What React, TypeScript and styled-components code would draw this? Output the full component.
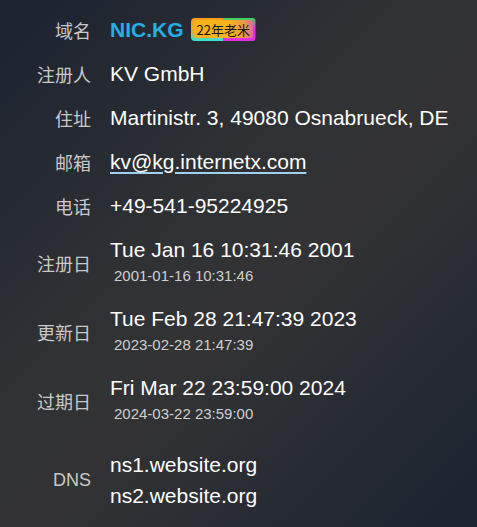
import React from "react";
import styled, { createGlobalStyle } from "styled-components";

const GlobalStyle = createGlobalStyle`
  html, body { margin: 0; padding: 0; }
  body {
    min-height: 527px;
    background: linear-gradient(135deg, #1b2230 0%, #2f3134 40%, #333335 55%, #1b2330 100%);
    font-family: "Liberation Sans", Arial, "Noto Sans CJK SC", sans-serif;
    color: #fff;
  }
`;

const Page = styled.div`
  padding: 7px 0 0 0;
`;

const Table = styled.div`
  display: grid;
  grid-template-columns: 91px 1fr;
  column-gap: 19px;
`;

const Label = styled.div`
  display: flex;
  align-items: center;
  justify-content: flex-end;
  font-family: "Liberation Sans", Arial, "Noto Sans CJK SC", sans-serif;
  font-size: 18px;
  color: #c9c9c9;
  white-space: nowrap;
`;

const Value = styled.div<{ $padTop?: number; $padBottom?: number }>`
  padding: ${(p) => p.$padTop ?? 11}px 0 ${(p) => p.$padBottom ?? 11}px 0;
  font-size: 21px;
  line-height: 22px;
  color: #fff;
  display: flex;
  flex-direction: column;
  justify-content: center;
  white-space: nowrap;
`;

const DomainLine = styled.div`
  display: flex;
  align-items: center;
  gap: 7px;
`;

const Domain = styled.span`
  color: #27aee6;
  font-weight: bold;
  font-size: 21px;
`;

const Badge = styled.span`
  position: relative;
  display: inline-flex;
  align-items: center;
  height: 23px;
  padding: 0 6px;
  border-radius: 4px;
  background:
    linear-gradient(to bottom, #33e05a 0%, #e62ee0 45%, #e62ee0 100%) right / 50% 100% no-repeat,
    linear-gradient(to bottom, #ff9d1a 0%, #f7a81a 55%, #2ee6e0 100%) left / 50% 100% no-repeat;
  box-sizing: border-box;
  font-family: "Noto Sans CJK SC", sans-serif;
  font-size: 13px;
  line-height: 17px;
  color: #111;
  &::before {
    content: "";
    position: absolute;
    left: 3px;
    right: 3px;
    top: 2px;
    bottom: 3px;
    border-radius: 3px;
    background: linear-gradient(to right, #f7b21c 0%, #f7b21c 60%, #e79a4a 85%, #dd6aa0 100%);
  }
`;

const BadgeText = styled.span`
  position: relative;
`;

const Mail = styled.a`
  color: #fff;
  text-decoration: underline;
  text-decoration-color: #9fd2f0;
  text-decoration-thickness: 2px;
  text-underline-offset: 3px;
`;

const Small = styled.div`
  margin-top: 5px;
  padding-left: 4px;
  font-size: 15px;
  line-height: 20px;
  color: #cfcfcf;
`;

const Ns = styled.div`
  padding: 5px 0;
  line-height: 21px;
`;

type DateRow = { label: string; long: string; short: string };

const dates: DateRow[] = [
  { label: "注册日", long: "Tue Jan 16 10:31:46 2001", short: "2001-01-16 10:31:46" },
  { label: "更新日", long: "Tue Feb 28 21:47:39 2023", short: "2023-02-28 21:47:39" },
  { label: "过期日", long: "Fri Mar 22 23:59:00 2024", short: "2024-03-22 23:59:00" },
];

export default function App() {
  return (
    <>
      <GlobalStyle />
      <Page>
        <Table>
          <Label>域名</Label>
          <Value>
            <DomainLine>
              <Domain>NIC.KG</Domain>
              <Badge>
                <BadgeText>22年老米</BadgeText>
              </Badge>
            </DomainLine>
          </Value>

          <Label>注册人</Label>
          <Value>KV GmbH</Value>

          <Label>住址</Label>
          <Value>Martinistr. 3, 49080 Osnabrueck, DE</Value>

          <Label>邮箱</Label>
          <Value>
            <div>
              <Mail href="#">kv@kg.internetx.com</Mail>
            </div>
          </Value>

          <Label>电话</Label>
          <Value>+49-541-95224925</Value>

          {dates.map((d) => (
            <React.Fragment key={d.label}>
              <Label>{d.label}</Label>
              <Value>
                <div>{d.long}</div>
                <Small>{d.short}</Small>
              </Value>
            </React.Fragment>
          ))}

          <Label>DNS</Label>
          <Value $padTop={14} $padBottom={14}>
            <Ns>ns1.website.org</Ns>
            <Ns>ns2.website.org</Ns>
          </Value>
        </Table>
      </Page>
    </>
  );
}
